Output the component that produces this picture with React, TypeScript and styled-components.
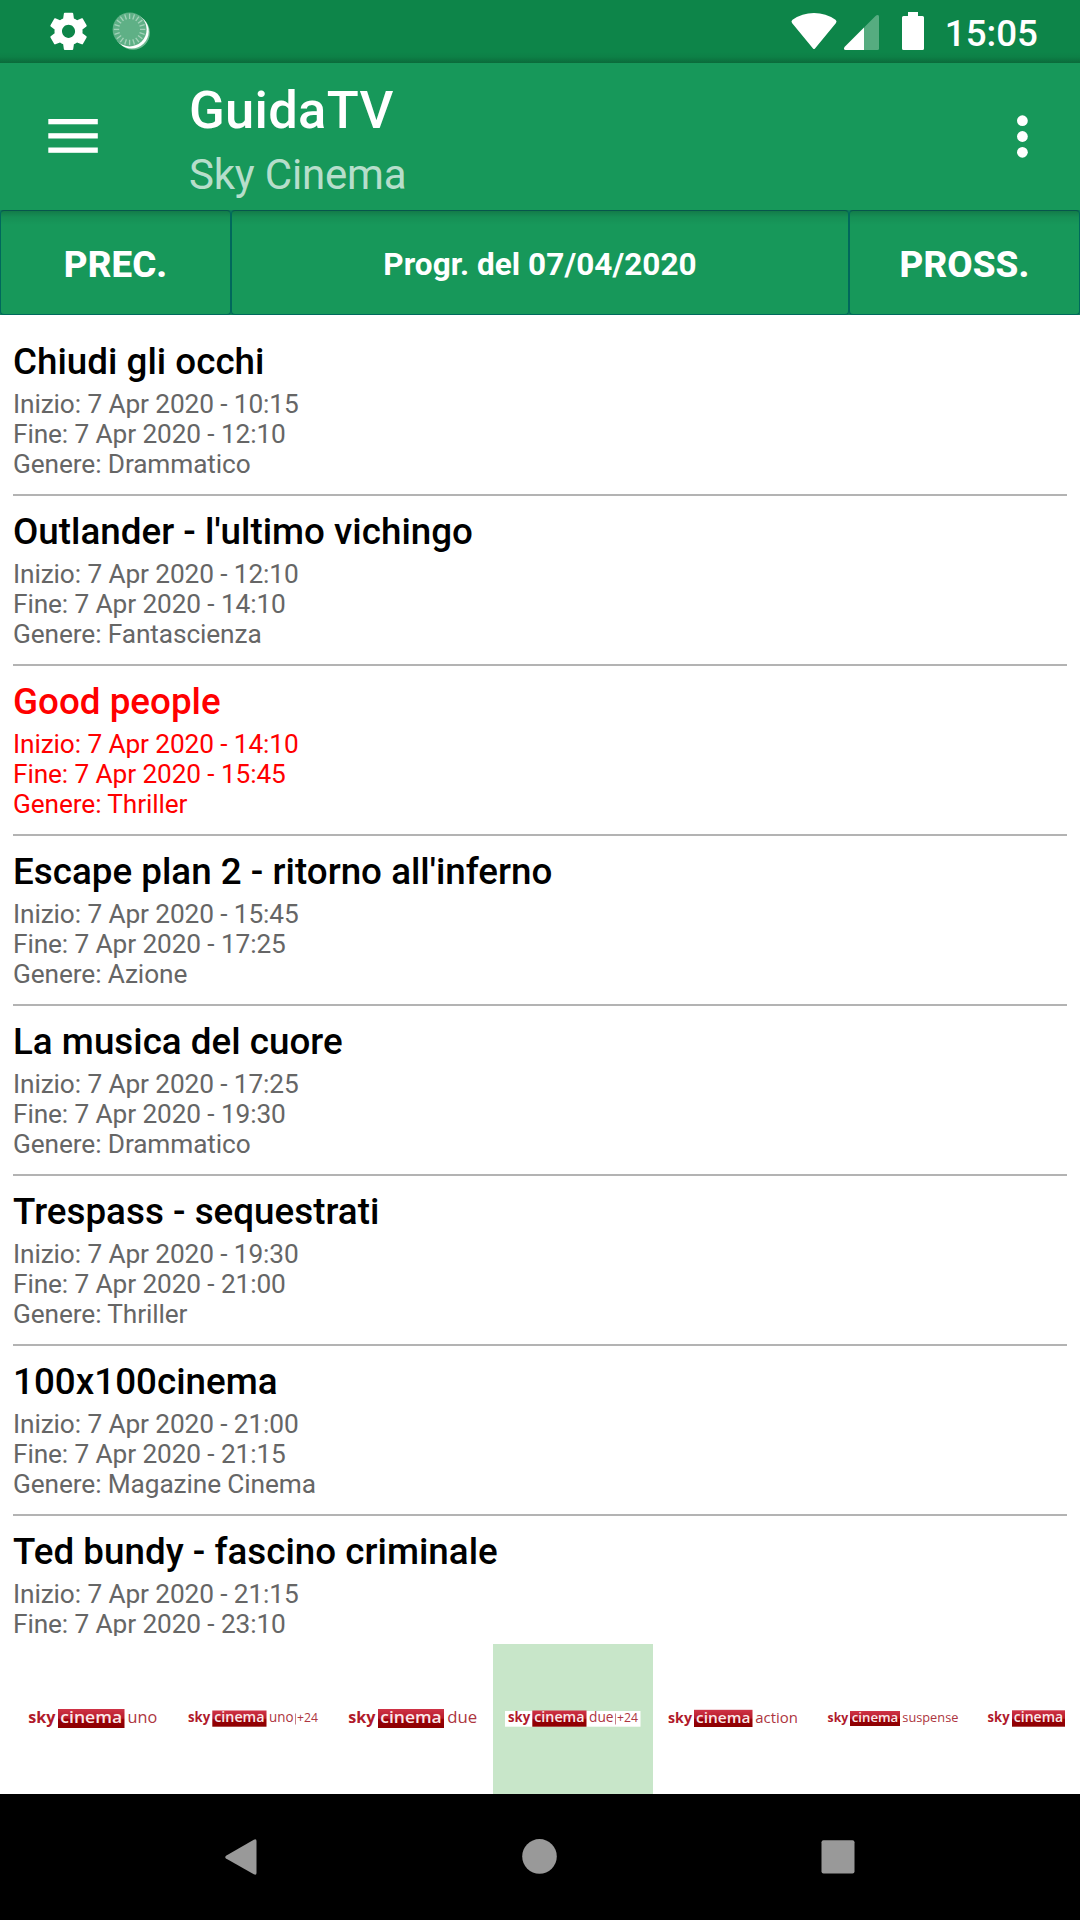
import React from "react";
import styled, { createGlobalStyle } from "styled-components";

const Global = createGlobalStyle`
  * { box-sizing: border-box; }
  html, body { margin: 0; padding: 0; background: #fff; }
  body { font-family: Roboto, "Liberation Sans", sans-serif; overflow: hidden; }
  svg { display: block; flex: none; }
`;

const Screen = styled.div`
  width: 1080px;
  height: 1920px;
  display: flex;
  flex-direction: column;
  overflow: hidden;
  background: #fff;
`;

const StatusBar = styled.div`
  height: 63px;
  flex: none;
  display: flex;
  align-items: flex-start;
  justify-content: space-between;
  padding: 0 42px 0 46px;
  background: linear-gradient(to bottom, transparent 52px, rgba(0, 0, 0, 0.04) 57px, rgba(0, 0, 0, 0.2) 63px), #0d8549;
`;

const StatusGroup = styled.div`
  display: flex;
`;

const Clock = styled.span`
  margin-left: 19px;
  padding-top: 11.5px;
  font-size: 36.75px;
  line-height: 43px;
  font-weight: 500;
  color: #fff;
`;

const Toolbar = styled.header`
  height: 147px;
  flex: none;
  display: flex;
  align-items: flex-start;
  padding: 0 26px 0 42px;
  background: #17985a;
  color: #fff;
`;

const Titles = styled.div`
  flex: 1;
  margin-left: 84px;
  padding-top: 17px;
`;

const AppTitle = styled.h1`
  margin: 0;
  font-size: 52.5px;
  line-height: 61px;
  font-weight: 500;
  letter-spacing: 0.3px;
`;

const AppSubtitle = styled.div`
  margin-top: 9px;
  font-size: 42px;
  line-height: 50px;
  letter-spacing: -0.18px;
  color: rgba(255, 255, 255, 0.7);
`;

const DayBar = styled.div`
  height: 105px;
  flex: none;
  display: grid;
  grid-template-columns: 231px 1fr 231px;
  background: #0f7d58;
`;

const DayButton = styled.button<{ $small?: boolean }>`
  border: 1px solid #00695c;
  border-top-color: #07564c;
  border-radius: 4px;
  padding: 3px 0 0;
  font-family: inherit;
  font-weight: ${(p) => (p.$small ? 700 : 800)};
  font-size: ${(p) => (p.$small ? "31.5px" : "36.75px")};
  line-height: 43px;
  letter-spacing: 0.06px;
  color: #fff;
  background: linear-gradient(to bottom, rgba(0, 0, 0, 0.19), rgba(0, 0, 0, 0.06) 6px, transparent 14px), #17985a;
`;

const Programmes = styled.main`
  height: 1321px;
  flex: none;
  padding: 11px 13px 0;
  overflow: hidden;
`;

const Programme = styled.article<{ $live: boolean }>`
  height: 170px;
  padding-top: 14px;
  border-bottom: 2px solid #b3b3b3;
  color: ${(p) => (p.$live ? "#ff0000" : "#666")};
`;

const ProgrammeTitle = styled.h2<{ $live: boolean }>`
  margin: 0 0 6px;
  font-size: 36.75px;
  line-height: 43px;
  font-weight: 500;
  letter-spacing: 0.02px;
  color: ${(p) => (p.$live ? "#ff0000" : "#000")};
`;

const Meta = styled.div`
  font-size: 26.25px;
  line-height: 30px;
  letter-spacing: -0.11px;
`;

const Channels = styled.div`
  height: 150px;
  flex: none;
  margin: 8px 13px 0;
  display: flex;
  overflow: hidden;
`;

const Channel = styled.div<{ $active: boolean }>`
  width: 160px;
  flex: none;
  background: ${(p) => (p.$active ? "#c8e6c9" : "transparent")};
`;

const NavBar = styled.nav`
  flex: 1;
  display: flex;
  align-items: center;
  justify-content: space-between;
  padding: 0 217px;
  background: #000;
`;

const programmes = [
  ["Chiudi gli occhi", "10:15", "12:10", "Drammatico"],
  ["Outlander - l'ultimo vichingo", "12:10", "14:10", "Fantascienza"],
  ["Good people", "14:10", "15:45", "Thriller"],
  ["Escape plan 2 - ritorno all'inferno", "15:45", "17:25", "Azione"],
  ["La musica del cuore", "17:25", "19:30", "Drammatico"],
  ["Trespass - sequestrati", "19:30", "21:00", "Thriller"],
  ["100x100cinema", "21:00", "21:15", "Magazine Cinema"],
  ["Ted bundy - fascino criminale", "21:15", "23:10", ""],
];
const liveIndex = 2;

type Logo = {
  sky: [number, number];
  box: [number, number, number, number];
  size: number;
  name?: string;
  nameX?: [number, number];
  plus?: boolean;
};

const logos: Logo[] = [
  { sky: [15.3, 42.5], box: [45, 65, 111.5, 84], size: 16.6, name: "uno", nameX: [114.5, 144.2] },
  { sky: [15, 37.2], box: [39.3, 66.5, 93.5, 82.7], size: 13.8, name: "uno", nameX: [96, 120.5], plus: true },
  { sky: [15.3, 42.5], box: [45, 65, 111, 84], size: 16.6, name: "due", nameX: [114.2, 144.2] },
  { sky: [15, 37.2], box: [39.3, 66.5, 93.5, 82.7], size: 13.8, name: "due", nameX: [96, 120.5], plus: true },
  { sky: [15, 39], box: [41, 65.8, 99.5, 83], size: 15, name: "action", nameX: [102.3, 145] },
  { sky: [14.6, 35.2], box: [37, 67, 87, 82], size: 12.8, name: "suspense", nameX: [89.3, 145.4] },
  { sky: [14.6, 36.6], box: [39, 66.3, 92, 82.7], size: 13.6 },
];
const activeChannel = 3;

const logoFont = '"Open Sans", "Noto Sans", sans-serif';

function Word(p: { x: [number, number]; y: number; size: number; weight: number; fill: string; children: string }) {
  return (
    <text
      x={p.x[0]}
      y={p.y}
      textLength={p.x[1] - p.x[0]}
      lengthAdjust="spacingAndGlyphs"
      fontFamily={logoFont}
      fontSize={p.size}
      fontWeight={p.weight}
      fill={p.fill}
    >
      {p.children}
    </text>
  );
}

function ChannelLogo({ logo, active }: { logo: Logo; active: boolean }) {
  const [x1, y1, x2, y2] = logo.box;
  const base = 74.5 + logo.size * 0.27;
  const pad = (x2 - x1) * 0.035;
  return (
    <svg width="160" height="150" viewBox="0 0 160 150">
      <defs>
        <linearGradient id="skyRed" x1="0" y1="0" x2="0" y2="1">
          <stop offset="0" stopColor="#cf3346" />
          <stop offset="0.48" stopColor="#b81c2c" />
          <stop offset="0.56" stopColor="#980008" />
          <stop offset="1" stopColor="#8c0000" />
        </linearGradient>
      </defs>
      {active && <rect x="12" y="67" width="135.5" height="15.7" fill="#fff" />}
      <Word x={logo.sky} y={base} size={logo.size * 0.98} weight={700} fill="#b01a2b">sky</Word>
      <rect x={x1} y={y1} width={x2 - x1} height={y2 - y1} fill="url(#skyRed)" />
      <Word x={[x1 + pad, x2 - pad]} y={base} size={logo.size} weight={600} fill="#fbe9ea">cinema</Word>
      {logo.name && logo.nameX && (
        <Word x={logo.nameX} y={base} size={logo.size} weight={400} fill="#ad3540">{logo.name}</Word>
      )}
      {logo.plus && (
        <>
          <rect x="122" y="69.5" width="1" height="11" fill="#c98087" />
          <Word x={[124, 145]} y={base} size={12} weight={500} fill="#ad3540">+24</Word>
        </>
      )}
    </svg>
  );
}

const ticks = Array.from({ length: 20 }, (_, i) => i * 18);

function SystemIcons() {
  return (
    <svg width="120" height="63" viewBox="46 0 120 63">
      <path
        transform="translate(46.1 8.9) scale(1.87)"
        fill="#fff"
        d="M19.43 12.98c.04-.32.07-.64.07-.98s-.03-.66-.07-.98l2.11-1.65c.19-.15.24-.42.12-.64l-2-3.46c-.12-.22-.39-.3-.61-.22l-2.49 1c-.52-.4-1.08-.73-1.69-.98l-.38-2.65C14.46 2.18 14.25 2 14 2h-4c-.25 0-.46.18-.49.42l-.38 2.65c-.61.25-1.17.59-1.69.98l-2.49-1c-.23-.09-.49 0-.61.22l-2 3.46c-.13.22-.07.49.12.64l2.11 1.65c-.04.32-.07.65-.07.98s.03.66.07.98l-2.11 1.65c-.19.15-.24.42-.12.64l2 3.46c.12.22.39.3.61.22l2.49-1c.52.4 1.08.73 1.69.98l.38 2.65c.03.24.24.42.49.42h4c.25 0 .46-.18.49-.42l.38-2.65c.61-.25 1.17-.59 1.69-.98l2.49 1c.23.09.49 0 .61-.22l2-3.46c.12-.22.07-.49-.12-.64l-2.11-1.65zM12 15.5c-1.93 0-3.5-1.57-3.5-3.5s1.57-3.5 3.5-3.5 3.5 1.57 3.5 3.5-1.57 3.5-3.5 3.5z"
      />
      <circle cx="133" cy="32.8" r="16.9" fill="#6fb992" />
      <circle cx="131.6" cy="31.4" r="17.1" fill="#fff" />
      <circle cx="129.6" cy="29.4" r="17" fill="#5fb086" />
      {ticks.map((a) => (
        <line key={a} x1="129.6" y1="13.6" x2="129.6" y2="19" stroke="#a3d2b9" strokeWidth="1.3" transform={`rotate(${a} 129.6 29.4)`} />
      ))}
    </svg>
  );
}

function SignalIcons() {
  return (
    <svg width="136" height="63" viewBox="790 0 136 63">
      <path fill="#fff" d="M813 48.6Q814 49.6 815 48.6L836 23Q837.3 21 835.5 19.8Q826 13 814 13T792.5 19.8Q790.7 21 792 23Z" />
      <path fill="#56ac80" d="M864 50V27.5L875.5 16Q877 14.6 878.5 15.2Q879 15.6 879 17V48.5Q879 50 877.5 50Z" />
      <path fill="#fff" d="M864 50H845.5Q843 49.5 844.5 47L864 27.5Z" />
      <path fill="#fff" d="M908 12H918V16H922.5Q924 16 924 17.5V48.5Q924 50 922.5 50H903.5Q902 50 902 48.5V17.5Q902 16 903.5 16H908Z" />
    </svg>
  );
}

export default function App() {
  return (
    <>
      <Global />
      <Screen>
        <StatusBar>
          <SystemIcons />
          <StatusGroup>
            <SignalIcons />
            <Clock>15:05</Clock>
          </StatusGroup>
        </StatusBar>
        <Toolbar>
          <svg width="63" height="147" viewBox="42 63 63 147" fill="#fff">
            <rect x="48.3" y="119" width="49.5" height="5.3" />
            <rect x="48.3" y="133.2" width="49.5" height="5.3" />
            <rect x="48.3" y="147.5" width="49.5" height="5.3" />
          </svg>
          <Titles>
            <AppTitle>GuidaTV</AppTitle>
            <AppSubtitle>Sky Cinema</AppSubtitle>
          </Titles>
          <svg width="64" height="147" viewBox="990 63 64 147" fill="#fff">
            <circle cx="1022.4" cy="120.7" r="5.4" />
            <circle cx="1022.4" cy="136.5" r="5.4" />
            <circle cx="1022.4" cy="152.3" r="5.4" />
          </svg>
        </Toolbar>
        <DayBar>
          <DayButton>PREC.</DayButton>
          <DayButton $small>Progr. del 07/04/2020</DayButton>
          <DayButton>PROSS.</DayButton>
        </DayBar>
        <Programmes>
          {programmes.map(([title, start, end, genre], i) => (
            <Programme key={title} $live={i === liveIndex}>
              <ProgrammeTitle $live={i === liveIndex}>{title}</ProgrammeTitle>
              <Meta>Inizio: 7 Apr 2020 - {start}</Meta>
              <Meta>Fine: 7 Apr 2020 - {end}</Meta>
              {genre && <Meta>Genere: {genre}</Meta>}
            </Programme>
          ))}
        </Programmes>
        <Channels>
          {logos.map((logo, i) => (
            <Channel key={i} $active={i === activeChannel}>
              <ChannelLogo logo={logo} active={i === activeChannel} />
            </Channel>
          ))}
        </Channels>
        <NavBar>
          <svg width="48" height="48" viewBox="217 1833 48 48" fill="#999">
            <path d="M226 1855.8L253.8 1839.7Q256.5 1838.5 256.5 1841V1873Q256.5 1875.5 253.8 1874.3L226 1858.6Q224.5 1857.2 226 1855.8Z" />
          </svg>
          <svg width="48" height="48" viewBox="516 1833 48 48" fill="#999">
            <circle cx="539.5" cy="1856.4" r="17.3" />
          </svg>
          <svg width="48" height="48" viewBox="815 1833 48 48" fill="#999">
            <rect x="821.5" y="1840.3" width="33" height="33.2" rx="2" />
          </svg>
        </NavBar>
      </Screen>
    </>
  );
}
